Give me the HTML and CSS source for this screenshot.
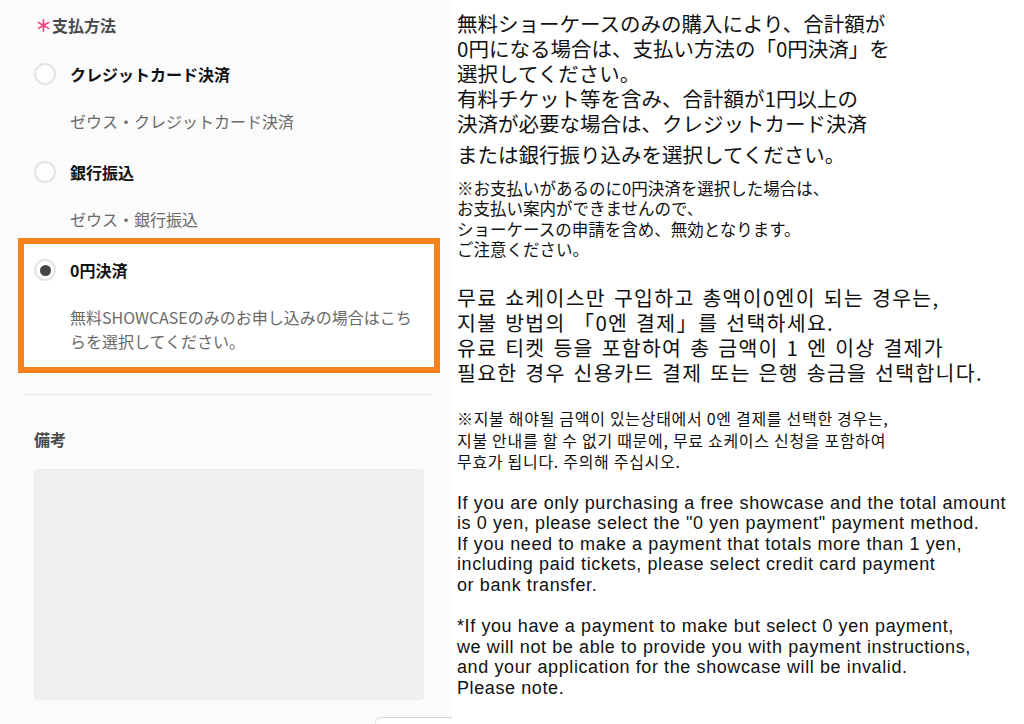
FILE: index.html
```html
<!DOCTYPE html>
<html lang="ja">
<head>
    <meta charset="UTF-8">
    <meta name="viewport" content="width=device-width, initial-scale=1.0">
    <title>支払方法</title>
    <link rel="stylesheet" href="styles.css">
</head>
<body>
    <div class="page">
        <!-- 左: フォーム -->
        <div class="form-panel">
            <div class="field-label"><span class="required">＊</span>支払方法</div>

            <div class="option first">
                <div class="option-row">
                    <span class="radio"></span>
                    <span class="option-name">クレジットカード決済</span>
                </div>
                <div class="option-desc">ゼウス・クレジットカード決済</div>
            </div>

            <div class="option">
                <div class="option-row">
                    <span class="radio"></span>
                    <span class="option-name">銀行振込</span>
                </div>
                <div class="option-desc">ゼウス・銀行振込</div>
            </div>

            <div class="option highlight">
                <div class="option-row">
                    <span class="radio checked"></span>
                    <span class="option-name">0円決済</span>
                </div>
                <div class="option-desc">無料SHOWCASEのみのお申し込みの場合はこちらを選択してください。</div>
            </div>

            <hr class="divider">

            <div class="field-label">備考</div>
            <div class="memo"></div>
            <div class="float-tab"></div>
        </div>

        <!-- 右: 注意書き -->
        <div class="notice">
            <p class="big">無料ショーケースのみの購入により、合計額が<br>0円になる場合は、支払い方法の「0円決済」を<br>選択してください。<br>有料チケット等を含み、合計額が1円以上の<br>決済が必要な場合は、クレジットカード決済</p>
            <p class="big last">または銀行振り込みを選択してください。</p>
            <p class="small">※お支払いがあるのに0円決済を選択した場合は、<br>お支払い案内ができませんので、<br>ショーケースの申請を含め、無効となります。<br>ご注意ください。</p>

            <p class="big ko">무료 쇼케이스만 구입하고 총액이0엔이 되는 경우는,<br>지불 방법의 「0엔 결제」를 선택하세요.<br>유료 티켓 등을 포함하여 총 금액이 1 엔 이상 결제가<br>필요한 경우 신용카드 결제 또는 은행 송금을 선택합니다.</p>
            <p class="small ko">※지불 해야될 금액이 있는상태에서 0엔 결제를 선택한 경우는,<br>지불 안내를 할 수 없기 때문에, 무료 쇼케이스 신청을 포함하여<br>무효가 됩니다. 주의해 주십시오.</p>

            <p class="en">If you are only purchasing a free showcase and the total amount<br>is 0 yen, please select the "0 yen payment" payment method.<br>If you need to make a payment that totals more than 1 yen,<br>including paid tickets, please select credit card payment<br>or bank transfer.</p>
            <p class="en">*If you have a payment to make but select 0 yen payment,<br>we will not be able to provide you with payment instructions,<br>and your application for the showcase will be invalid.<br>Please note.</p>
        </div>
    </div>
</body>
</html>
```

FILE: styles.css
```css
body {
    margin: 0;
    background-color: #fff;
    font-family: "Noto Sans CJK JP", "Noto Sans", sans-serif;
    color: #222;
}
.page {
    display: flex;
    height: 724px;
    overflow: hidden;
}
.form-panel {
    width: 390px;
    flex-shrink: 0;
    background-color: #fbfbfb;
    padding: 13px 28px 0 34px;
}
.field-label {
    font-size: 16px;
    line-height: 24px;
    font-weight: bold;
    color: #4a4a4a;
}
.required {
    color: #f0457a;
    font-size: 17px;
    font-weight: bold;
    line-height: 0;
    margin-left: 1px;
}
.option {
    padding: 14px 0 13px;
}
.option.first {
    margin-top: 11px;
}
.option-row {
    display: flex;
    align-items: center;
    height: 24px;
}
.radio {
    width: 18px;
    height: 18px;
    border: 2px solid #e4e4e4;
    border-radius: 50%;
    background-color: #fff;
    margin-right: 14px;
    display: flex;
    align-items: center;
    justify-content: center;
}
.radio.checked::after {
    content: "";
    width: 11px;
    height: 11px;
    border-radius: 50%;
    background-color: #444;
}
.option-name {
    font-size: 16px;
    font-weight: bold;
    color: #111;
}
.option-desc {
    margin-top: 23px;
    padding-left: 36px;
    font-size: 16px;
    line-height: 24px;
    color: #6a6a6a;
}
.option.highlight {
    margin: -6px -16px 0;
    border: 6px solid #f7821b;
    padding: 14px 12px 14px 10px;
    background-color: #fff;
}
.divider {
    border: none;
    border-top: 1px solid #e8e8e8;
    margin: 21px -10px 32px;
}
.memo {
    margin-top: 18px;
    height: 231px;
    background-color: #f0f0f0;
    border: 1px solid #ececec;
    border-radius: 4px;
    box-sizing: border-box;
}
.float-tab {
    margin: 17px -28px 0 341px;
    height: 20px;
    border-top: 1px solid #d6d6d6;
    border-left: 1px solid #e2e2e2;
    border-top-left-radius: 6px;
    background-color: #fff;
}
.notice {
    padding: 11px 0 0 5px;
    color: #111;
}
.notice p {
    margin: 0;
    white-space: nowrap;
}
.big {
    font-size: 20.5px;
    line-height: 25px;
}
.big.last {
    margin-top: 6px;
}
.small {
    font-size: 16.5px;
    line-height: 20.3px;
    margin-top: 11px !important;
}
.ko {
    font-family: "Noto Sans CJK KR", sans-serif;
}
.big.ko {
    margin-top: 26px;
    letter-spacing: 1.3px;
    word-spacing: 2px;
}
.small.ko {
    margin-top: 23px !important;
    font-size: 16px;
    line-height: 21.5px;
    letter-spacing: 0.7px;
}
.en {
    font-family: "Liberation Sans", Arial, sans-serif;
    font-size: 18px;
    line-height: 20.6px;
    letter-spacing: 0.6px;
    margin-top: 20px !important;
}
.en + .en {
    margin-top: 20.6px !important;
}
```
